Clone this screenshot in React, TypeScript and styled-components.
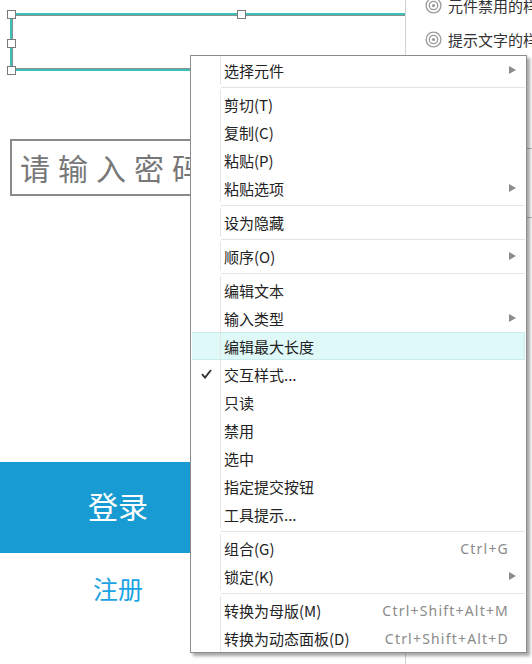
import styled, { createGlobalStyle } from 'styled-components'

const GlobalStyle = createGlobalStyle`
  html, body {
    margin: 0;
    padding: 0;
    background: #ffffff;
    overflow: hidden;
  }
  body {
    font-family: "Noto Sans CJK SC", "Noto Sans", sans-serif;
  }
`;

// --- Layout ---

const Page = styled.div`
  position: relative;
  display: flex;
  width: 532px;
  height: 664px;
  overflow: hidden;
`;

const Canvas = styled.div`
  position: relative;
  width: 405px;
  flex-shrink: 0;
  display: flex;
  flex-direction: column;
  align-items: flex-start;
  overflow: hidden;
`;

const SelectedBox = styled.div`
  position: relative;
  box-sizing: border-box;
  margin: 13px 0 0 10px;
  width: 460px;
  height: 58px;
  border: 2px solid #3cbfb6;
  box-shadow: inset 0 0 0 1px #8d8d8d;
`;

const Handle = styled.span<{ $x: string; $y: string }>`
  position: absolute;
  left: ${p => p.$x};
  top: ${p => p.$y};
  width: 7px;
  height: 7px;
  margin: -5px 0 0 -5px;
  background: #ffffff;
  border: 1px solid #7a7a7a;
`;

const PasswordBox = styled.div`
  box-sizing: border-box;
  margin: 68px 0 0 10px;
  width: 420px;
  height: 57px;
  border: 2px solid #8a8a8a;
  padding: 0 0 2px 8px;
  display: flex;
  align-items: center;
  font-size: 30px;
  letter-spacing: 8px;
  color: #777777;
`;

const LoginBar = styled.div`
  box-sizing: border-box;
  margin-top: 266px;
  width: 236px;
  height: 91px;
  padding-bottom: 5px;
  background: #189bd2;
  color: #ffffff;
  font-size: 30px;
  display: flex;
  align-items: center;
  justify-content: center;
`;

const RegisterLink = styled.div`
  margin-top: 17px;
  width: 236px;
  height: 36px;
  line-height: 36px;
  text-align: center;
  font-size: 25px;
  color: #1ba4e4;
`;

// --- Right panel ---

const SidePanel = styled.div`
  flex: 1;
  min-width: 0;
  border-left: 1px solid #d2d2d2;
  display: flex;
  flex-direction: column;
  margin-top: -12px;
  overflow: hidden;
`;

const StyleRow = styled.div`
  display: flex;
  align-items: center;
  gap: 6px;
  height: 34px;
  padding-left: 19px;
  font-size: 15px;
  color: #333333;
  white-space: nowrap;

  svg {
    flex-shrink: 0;
  }
`;

const PanelRule = styled.div<{ $gap: number }>`
  margin-top: ${p => p.$gap}px;
  height: 1px;
  background: #bdbdbd;
`;

function TargetIcon() {
  return (
    <svg width="17" height="17" viewBox="0 0 17 17" aria-hidden="true">
      <circle cx="8.5" cy="8.5" r="7.4" fill="none" stroke="#9a9a9a" strokeWidth="1.3" />
      <circle cx="8.5" cy="8.5" r="4.2" fill="none" stroke="#9a9a9a" strokeWidth="1.3" />
      <circle cx="8.5" cy="8.5" r="1.6" fill="#9a9a9a" />
    </svg>
  )
}

// --- Context menu ---

const Menu = styled.div`
  position: absolute;
  left: 190px;
  top: 55px;
  width: 335px;
  border: 1px solid #8c8c8c;
  background: #ffffff;
  box-shadow: 3px 3px 3px rgba(0, 0, 0, 0.35);
  display: flex;
  flex-direction: column;
  font-size: 15px;
  color: #222222;
`;

const Row = styled.div<{ $active?: boolean }>`
  box-sizing: border-box;
  display: flex;
  align-items: center;
  height: 28px;
  margin: 0 1px;
  background: ${p => p.$active ? '#dff8f8' : 'transparent'};
  border: 1px solid ${p => p.$active ? '#c9eded' : 'transparent'};
  border-left: none;
  border-right: ${p => p.$active ? '1px solid #c9eded' : 'none'};
`;

const Gutter = styled.span`
  box-sizing: border-box;
  width: 29px;
  align-self: stretch;
  margin: -1px 0;
  border-right: 1px solid #e6e6e6;
  display: flex;
  align-items: center;
  justify-content: center;
`;

const Label = styled.span`
  flex: 1;
  padding-left: 3px;
  white-space: nowrap;
`;

const Shortcut = styled.span`
  color: #8a8a8a;
  font-family: "Noto Sans", sans-serif;
  font-size: 14px;
  letter-spacing: 1.2px;
  margin-right: 16px;
  white-space: nowrap;
`;

const Arrow = styled.span`
  width: 0;
  height: 0;
  margin-right: 9px;
  border-top: 4px solid transparent;
  border-bottom: 4px solid transparent;
  border-left: 7px solid #8c8c8c;
`;

const Separator = styled.div`
  height: 1px;
  margin: 3px 1px 2px 30px;
  background: #e4e4e4;
`;

type Entry =
  | { sep: true }
  | { label: string; sub?: boolean; shortcut?: string; checked?: boolean; active?: boolean }

const entries: Entry[] = [
  { label: '选择元件', sub: true },
  { sep: true },
  { label: '剪切(T)' },
  { label: '复制(C)' },
  { label: '粘贴(P)' },
  { label: '粘贴选项', sub: true },
  { sep: true },
  { label: '设为隐藏' },
  { sep: true },
  { label: '顺序(O)', sub: true },
  { sep: true },
  { label: '编辑文本' },
  { label: '输入类型', sub: true },
  { label: '编辑最大长度', active: true },
  { label: '交互样式...', checked: true },
  { label: '只读' },
  { label: '禁用' },
  { label: '选中' },
  { label: '指定提交按钮' },
  { label: '工具提示...' },
  { sep: true },
  { label: '组合(G)', shortcut: 'Ctrl+G' },
  { label: '锁定(K)', sub: true },
  { sep: true },
  { label: '转换为母版(M)', shortcut: 'Ctrl+Shift+Alt+M' },
  { label: '转换为动态面板(D)', shortcut: 'Ctrl+Shift+Alt+D' },
]

function CheckMark() {
  return (
    <svg width="11" height="10" viewBox="0 0 11 10" aria-hidden="true">
      <path d="M1 5.2 L4 8.6 L10 1" fill="none" stroke="#333" strokeWidth="1.9" />
    </svg>
  )
}

function ContextMenu() {
  return (
    <Menu role="menu">
      {entries.map((e, i) =>
        'sep' in e ? (
          <Separator key={i} />
        ) : (
          <Row key={i} role="menuitem" $active={e.active}>
            <Gutter>{e.checked && <CheckMark />}</Gutter>
            <Label>{e.label}</Label>
            {e.shortcut && <Shortcut>{e.shortcut}</Shortcut>}
            {e.sub && <Arrow />}
          </Row>
        )
      )}
    </Menu>
  )
}

export default function App() {
  return (
    <>
      <GlobalStyle />
      <Page>
        <Canvas>
          <SelectedBox>
            <Handle $x="0" $y="0" />
            <Handle $x="230px" $y="0" />
            <Handle $x="0" $y="29px" />
            <Handle $x="0" $y="56px" />
          </SelectedBox>
          <PasswordBox>请输入密码</PasswordBox>
          <LoginBar>登录</LoginBar>
          <RegisterLink>注册</RegisterLink>
        </Canvas>
        <SidePanel>
          <StyleRow><TargetIcon />元件禁用的样式</StyleRow>
          <StyleRow><TargetIcon />提示文字的样式</StyleRow>
          <PanelRule $gap={92} />
          <PanelRule $gap={68} />
        </SidePanel>
        <ContextMenu />
      </Page>
    </>
  )
}
